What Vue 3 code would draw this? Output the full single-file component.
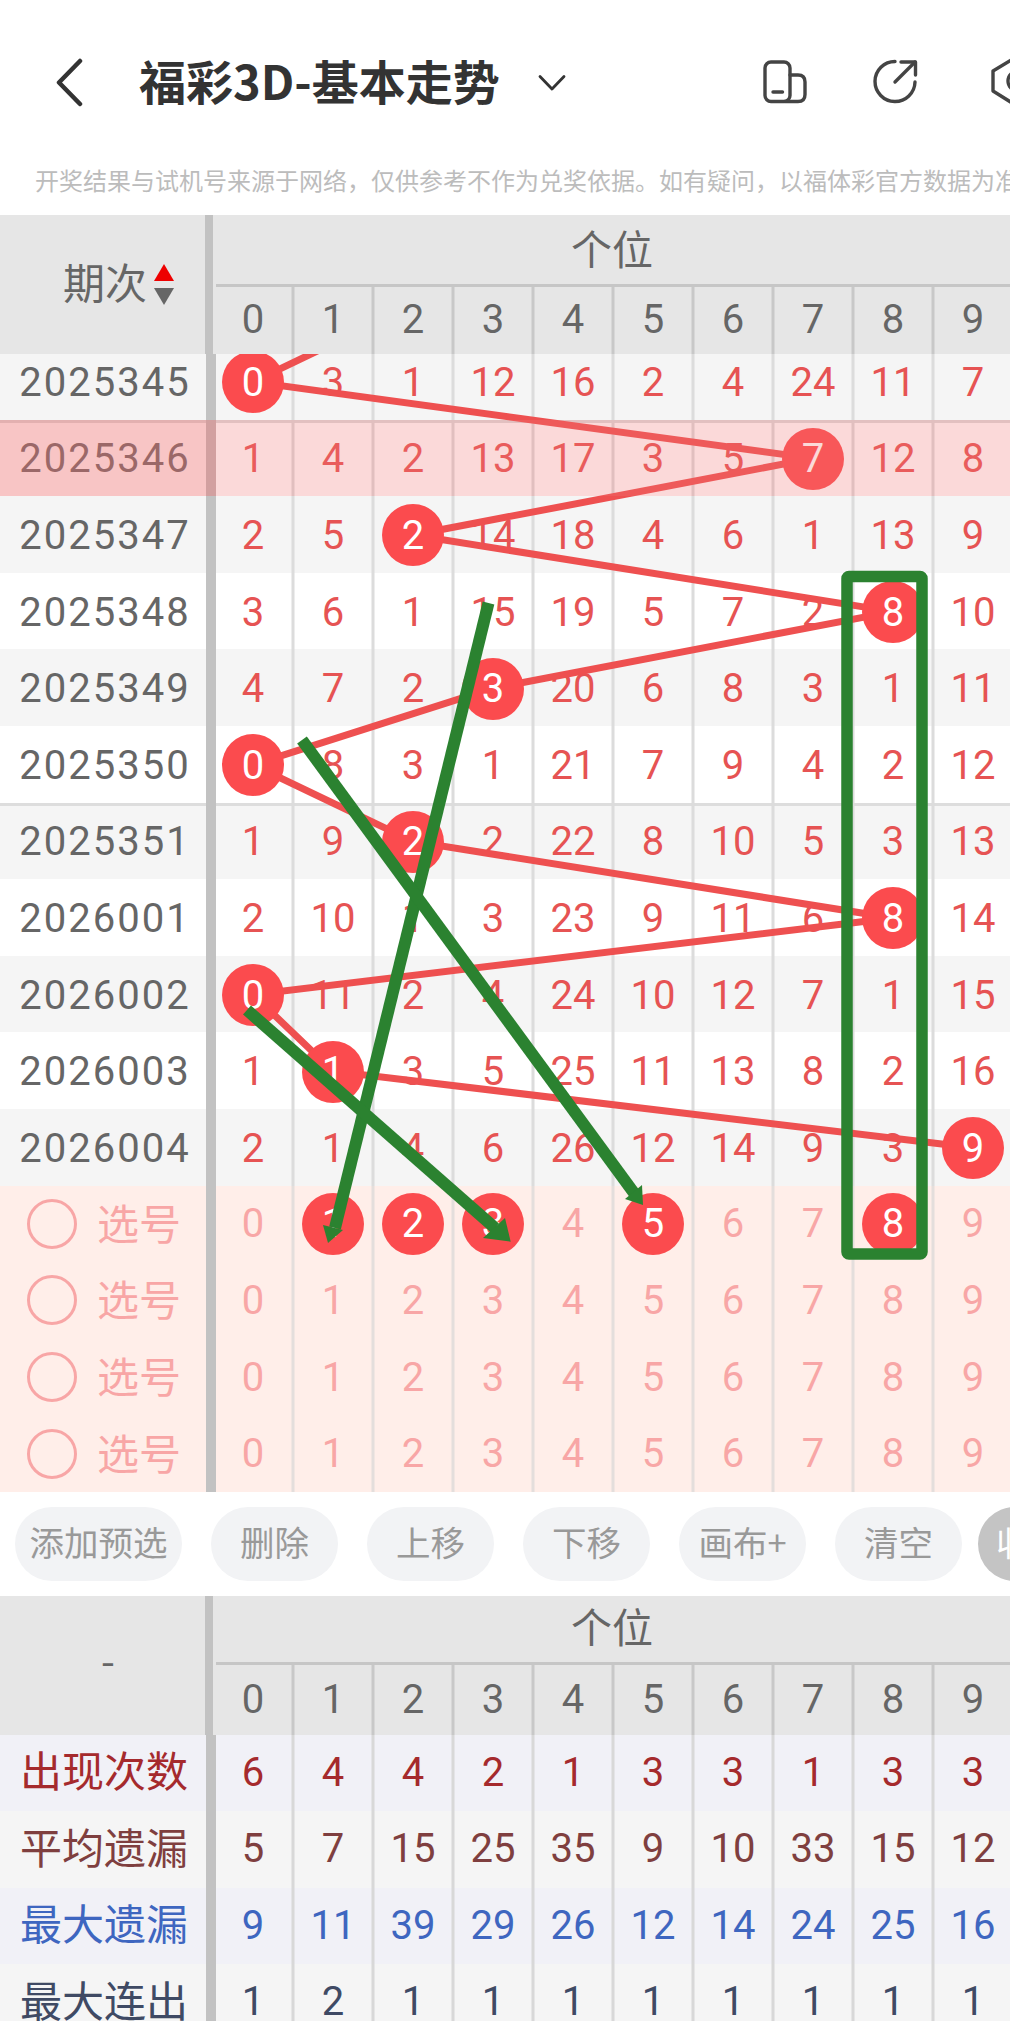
<script setup>
const heads = [0, 1, 2, 3, 4, 5, 6, 7, 8, 9]
const rows = [
  { id: '2025345', v: [0, 3, 1, 12, 16, 2, 4, 24, 11, 7], b: [0], cls: 'odd' },
  { id: '2025346', v: [1, 4, 2, 13, 17, 3, 5, 7, 12, 8], b: [7], cls: 'hl sep' },
  { id: '2025347', v: [2, 5, 2, 14, 18, 4, 6, 1, 13, 9], b: [2], cls: 'odd' },
  { id: '2025348', v: [3, 6, 1, 15, 19, 5, 7, 2, 8, 10], b: [8], cls: '' },
  { id: '2025349', v: [4, 7, 2, 3, 20, 6, 8, 3, 1, 11], b: [3], cls: 'odd' },
  { id: '2025350', v: [0, 8, 3, 1, 21, 7, 9, 4, 2, 12], b: [0], cls: '' },
  { id: '2025351', v: [1, 9, 2, 2, 22, 8, 10, 5, 3, 13], b: [2], cls: 'odd sep' },
  { id: '2026001', v: [2, 10, 1, 3, 23, 9, 11, 6, 8, 14], b: [8], cls: '' },
  { id: '2026002', v: [0, 11, 2, 4, 24, 10, 12, 7, 1, 15], b: [0], cls: 'odd' },
  { id: '2026003', v: [1, 1, 3, 5, 25, 11, 13, 8, 2, 16], b: [1], cls: '' },
  { id: '2026004', v: [2, 1, 4, 6, 26, 12, 14, 9, 3, 9], b: [9], cls: 'odd' }
]
const picks = [[1, 2, 3, 5, 8], [], [], []]
const stats = [
  { label: '出现次数', v: [6, 4, 4, 2, 1, 3, 3, 1, 3, 3], cls: 's1' },
  { label: '平均遗漏', v: [5, 7, 15, 25, 35, 9, 10, 33, 15, 12], cls: 's2' },
  { label: '最大遗漏', v: [9, 11, 39, 29, 26, 12, 14, 24, 25, 16], cls: 's3' },
  { label: '最大连出', v: [1, 2, 1, 1, 1, 1, 1, 1, 1, 1], cls: 's4' }
]
const buttons = ['添加预选', '删除', '上移', '下移', '画布+', '清空']

const seq = [2, 0, 7, 2, 8, 3, 0, 2, 8, 0, 1, 9]
const points = seq
  .map((c, i) => `${253 + 80 * c},${343 + 76.6 * (i - 1) + 38.8}`)
  .join(' ')
</script>

<template>
  <div class="page">
    <header class="nav">
      <svg class="back" width="30" height="50" viewBox="0 0 30 50">
        <path d="M25 4 L4 25.500 L25 47" />
      </svg>
      <h1 class="title">福彩3D-基本走势</h1>
      <svg class="drop" width="30" height="18" viewBox="0 0 30 18">
        <path d="M3 2.500 L15 15 L27 2.500" />
      </svg>
      <svg class="ico ico1" width="46" height="44" viewBox="0 0 46 44">
        <rect x="2" y="2" width="25" height="39.500" rx="6" />
        <path d="M27 15 H35 Q42 15 42 22 V34.500 Q42 41.500 35 41.500 H22" />
        <path d="M10 32 H19.500" />
      </svg>
      <svg class="ico ico2" width="46" height="46" viewBox="0 0 46 46">
        <path d="M22 2.500 A20 20 0 1 0 42 23" />
        <path d="M22 23 L42 3" />
        <path d="M28 3 H42.500 V16" />
      </svg>
      <svg class="ico ico3" width="30" height="50" viewBox="0 0 30 50">
        <path d="M22 2 L2 14 V34 L22 46.500 L30 50" />
        <circle cx="27" cy="24" r="10" />
      </svg>
    </header>
    <p class="notice">开奖结果与试机号来源于网络，仅供参考不作为兑奖依据。如有疑问，以福体彩官方数据为准</p>

    <section class="head">
      <div class="head-left">
        <span class="head-name">期次</span>
        <span class="sort"><i class="up"></i><i class="down"></i></span>
      </div>
      <div class="head-right">
        <div class="head-group">个位</div>
        <div class="head-cols">
          <span v-for="h in heads" :key="h" class="hcell">{{ h }}</span>
        </div>
      </div>
    </section>

    <section class="body">
      <div class="rows">
        <div v-for="r in rows" :key="r.id" class="row data" :class="r.cls">
          <div class="left num">{{ r.id }}</div>
          <div v-for="(n, c) in r.v" :key="c" class="cell num red">
            <span v-if="r.b.includes(c)" class="ball">{{ n }}</span>
            <template v-else>{{ n }}</template>
          </div>
        </div>
        <div v-for="(p, i) in picks" :key="'p' + i" class="row pick">
          <div class="left pick-left">
            <span class="radio"></span>
            <span class="pick-text">选号</span>
          </div>
          <div v-for="h in heads" :key="h" class="cell num pale">
            <span v-if="p.includes(h)" class="ball">{{ h }}</span>
            <template v-else>{{ h }}</template>
          </div>
        </div>

        <svg class="red-lines" width="1013" height="1149" viewBox="0 343 1013 1149">
          <polyline :points="points" />
        </svg>
        <svg class="green-lines" width="1013" height="1149" viewBox="0 343 1013 1149">
          <line x1="488.500" y1="603" x2="335" y2="1228" />
          <polygon points="328,1243 323,1225 343,1230" />
          <line x1="302" y1="740" x2="634" y2="1193" />
          <polygon points="643,1205 625,1199 642,1185" />
          <line x1="247" y1="1010" x2="495" y2="1228" />
          <polygon points="510.700,1241.700 483,1238 505,1218" />
          <rect x="847" y="576.500" width="75" height="677.500" rx="2" />
        </svg>
      </div>
    </section>

    <nav class="tools">
      <button v-for="(b, i) in buttons" :key="b" class="pill" :class="{ wide: i === 0 }">{{ b }}</button>
      <button class="pill fold">收起</button>
    </nav>

    <section class="head second">
      <div class="head-left dash"><span>-</span></div>
      <div class="head-right">
        <div class="head-group">个位</div>
        <div class="head-cols">
          <span v-for="h in heads" :key="h" class="hcell">{{ h }}</span>
        </div>
      </div>
    </section>
    <section class="stats">
      <div v-for="s in stats" :key="s.label" class="row" :class="s.cls">
        <div class="left slabel"><span>{{ s.label }}</span></div>
        <div v-for="(n, c) in s.v" :key="c" class="cell num">{{ n }}</div>
      </div>
    </section>
  </div>
</template>

<style>
html, body { margin: 0; background: #fff; overflow: hidden; }
</style>

<style scoped>
.page {
  width: 1010px;
  height: 2021px;
  overflow: hidden;
  background: #fff;
  font-family: "Noto Sans CJK SC", "Noto Sans", sans-serif;
}
.nav {
  height: 164px;
  display: flex;
  align-items: center;
  padding-left: 55px;
}
.nav svg { fill: none; stroke-linecap: round; stroke-linejoin: round; flex: none; }
.back { stroke: #333; stroke-width: 4.5; margin-right: 54px; }
.title {
  margin: -4px 0 0;
  width: 398px;
  flex: none;
  font-size: 47px;
  font-weight: 700;
  line-height: 60px;
  color: #333;
  white-space: nowrap;
}
.drop { stroke: #333; stroke-width: 2.800; margin-right: 196px; margin-top: 2px; }
.ico { stroke: #444; stroke-width: 3.400; }
.ico1 { margin-right: 64px; }
.ico2 { margin-right: 72px; }
.notice {
  margin: 0;
  height: 51px;
  line-height: 32px;
  padding-left: 35px;
  font-size: 24px;
  color: #bcbcbc;
  white-space: nowrap;
  overflow: hidden;
}
.head {
  width: 1013px;
  height: 139px;
  display: flex;
  background: #e6e6e6;
  color: #666;
}
.head-left {
  width: 213px;
  flex: none;
  display: flex;
  align-items: center;
  padding-left: 63px;
  box-sizing: border-box;
  box-shadow: inset -8px 0 #c2c2c2;
}
.head-name { font-size: 42px; line-height: 50px; margin-top: -8px; }
.sort { display: flex; flex-direction: column; gap: 7px; margin-left: 7px; }
.sort i { display: block; width: 0; height: 0; border-left: 10.500px solid transparent; border-right: 10.500px solid transparent; }
.sort .up { border-bottom: 17px solid #ee0000; }
.sort .down { border-top: 17px solid #666; }
.dash { padding: 0 0 12px 3px; justify-content: center; font-size: 40px; color: #666; }
.head-right { flex: 1; }
.head-group {
  margin-left: 3px;
  border-bottom: 3.500px solid #c6c6c6;
  display: flex;
  align-items: center;
  justify-content: center;
  font-size: 41px;
  padding: 0 5px 5px 0;
  box-sizing: border-box;
  height: 71.500px;
}
.second .head-group { height: 69.500px; padding-bottom: 8px; }
.head-cols { display: grid; grid-template-columns: repeat(10, 80px); height: 67.500px; }
.second .head-cols { height: 69.500px; }
.hcell {
  display: flex;
  align-items: center;
  justify-content: center;
  padding-bottom: 2px;
  box-sizing: border-box;
  font-family: Roboto, sans-serif;
  font-size: 40px;
  box-shadow: 1.500px 0 0 #c8c8c8, inset -1.500px 0 0 #c8c8c8;
}
.body {
  width: 1010px;
  height: 1137.700px;
  overflow: hidden;
}
.rows {
  position: relative;
  margin-top: -11px;
  width: 1013px;
}
.row {
  position: relative;
  height: 76.600px;
  display: grid;
  grid-template-columns: 213px repeat(10, 80px);
  background: #fff;
}
.row.odd { background: #f5f5f5; }
.row.sep { box-shadow: inset 0 3px #ddd; }
.row.pick { background: #ffeee9; }
.left {
  display: flex;
  align-items: center;
  justify-content: center;
  padding-right: 5px;
  box-sizing: border-box;
  box-shadow: inset -7px 0 #c2c2c2, 3px 0 #c2c2c2;
  color: #666;
}
.num {
  font-family: Roboto, sans-serif;
  font-size: 40px;
}
.data .num { padding-top: 2px; box-sizing: border-box; }
.left.num { letter-spacing: 2px; padding-right: 3px; }
.cell {
  display: flex;
  align-items: center;
  justify-content: center;
  box-shadow: 1.500px 0 0 #dcdcdc, inset -1.500px 0 0 #dcdcdc;
}
.red { color: #e65353; }
.pale { color: #f8a6a6; }
.pick .cell { box-shadow: 1.500px 0 0 #e4dedc, inset -1.500px 0 0 #e4dedc; }
.ball {
  position: relative;
  z-index: 2;
  width: 62px;
  height: 62px;
  border-radius: 50%;
  background: #fb4b4e;
  color: #fff;
  display: flex;
  align-items: center;
  justify-content: center;
}
.row.hl::after {
  content: "";
  position: absolute;
  inset: 0;
  z-index: 3;
  background: rgba(240, 120, 120, .28);
}
.row.hl .left { position: relative; }
.row.hl .left::after {
  content: "";
  position: absolute;
  inset: 0 -3px 0 0;
  z-index: 3;
  background: rgba(230, 90, 90, .16);
}
.pick-left { justify-content: flex-start; padding: 0 0 0 27px; }
.radio {
  width: 50px;
  height: 50px;
  border: 3.500px solid #f8a6a6;
  border-radius: 50%;
  box-sizing: border-box;
  flex: none;
}
.pick-text { margin: -5px 0 0 20px; font-size: 42px; color: #f8a6a6; }
.red-lines, .green-lines {
  position: absolute;
  left: 0;
  top: 0;
}
.red-lines { z-index: 1; }
.red-lines polyline {
  fill: none;
  stroke: #ee5050;
  stroke-width: 7;
}
.green-lines { z-index: 4; }
.green-lines line { stroke: #2b8230; stroke-width: 12; }
.green-lines polygon { fill: #2b8230; }
.green-lines rect { fill: none; stroke: #2b8230; stroke-width: 11.500; }
.tools {
  height: 104.300px;
  box-sizing: border-box;
  padding: 15.300px 0 0 15px;
  display: flex;
  align-items: flex-start;
  gap: 29px;
  overflow: hidden;
  background: #fff;
}
.pill {
  height: 74px;
  width: 127px;
  padding: 0 0 5px;
  flex: none;
  border: 0;
  border-radius: 37px;
  background: #f2f3f5;
  color: #999;
  font: inherit;
  font-size: 34.500px;
  box-sizing: border-box;
  white-space: nowrap;
}
.pill.wide { width: 167px; }
.pill.fold {
  margin-left: -13px;
  background: #c4c4c4;
  color: #fff;
  text-align: left;
  padding-left: 18px;
}
.stats { width: 1013px; }
.stats .row { height: 76.500px; background: #f5f5f5; }
.stats .s1, .stats .s3 { background: #f1f1f7; }
.stats .cell { padding-bottom: 2px; box-sizing: border-box; box-shadow: 1.500px 0 0 #d8d8d8, inset -1.500px 0 0 #d8d8d8; }
.slabel { font-size: 42px; white-space: nowrap; }
.slabel span { margin-top: -9px; }
.s1 .left, .s1 .cell { color: #a52a2d; }
.s2 .left, .s2 .cell { color: #7f3f3f; }
.s3 .left, .s3 .cell { color: #3e66c0; }
.s4 .left, .s4 .cell { color: #3f4a64; }
</style>
